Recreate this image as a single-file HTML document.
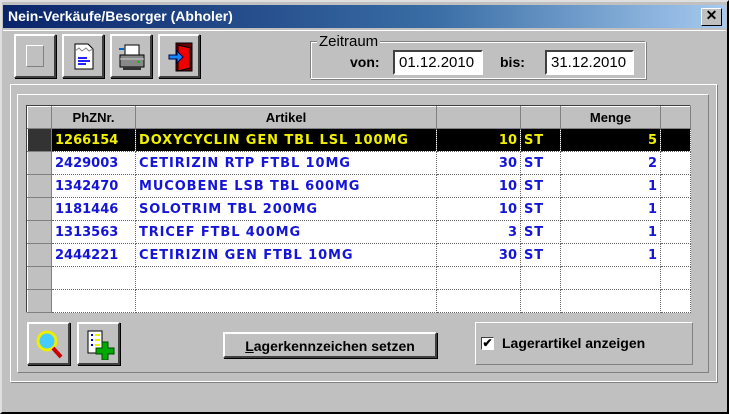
<html><head><style>
body{margin:0;width:729px;height:414px;background:#c0c0c0;font-family:"Liberation Sans",sans-serif;position:relative;overflow:hidden}
.a{position:absolute;box-sizing:border-box}
.btn{background:#c0c0c0;border:2px solid;border-color:#fff #404040 #404040 #fff;box-shadow:1px 1px 0 #000}
.inp{background:#fff;border:2px solid;border-color:#404040 #fff #fff #404040;font-size:15px;padding:2px 0 0 4px}
table{border-collapse:collapse;font-weight:bold;font-size:13px;font-family:"DejaVu Sans","Liberation Sans",sans-serif;table-layout:fixed}
td{height:23px;padding:0 3px;border-right:1px dotted #666;border-bottom:1px dotted #666;color:#1515d8;white-space:nowrap;overflow:hidden;box-sizing:border-box}
td.t{letter-spacing:0.9px}
th{height:22px;background:#c0c0c0;border:1px solid;border-color:#fff #808080 #808080 #fff;font-size:13px;font-family:"Liberation Sans",sans-serif}
td.i{background:#c0c0c0;border:1px solid;border-color:#fff #808080 #808080 #fff}
tr.sel td{background:#000;color:#f0f000}
tr.sel td.i{background:#333}
.r{text-align:right}
</style></head><body>
<div class="a" style="left:0;top:0;width:729px;height:414px;border:2px solid;border-color:#dfdfdf #000 #000 #dfdfdf"></div>
<div class="a" style="left:3px;top:5px;width:723px;height:23px;background:linear-gradient(90deg,#0a246a,#3a6ea5 60%,#a6caf0);color:#fff;font-weight:bold;font-size:14px;padding:3px 5px">Nein-Verkäufe/Besorger (Abholer)</div>
<div class="a btn" style="left:701px;top:8px;width:21px;height:18px;font-size:14px;font-weight:bold;text-align:center;line-height:13px;box-shadow:none;border-width:1px;border-color:#fff #000 #000 #fff">✕</div>
<div class="a" style="left:3px;top:29px;width:723px;height:2px;border-bottom:1px solid #fff"></div>
<div class="a btn" style="left:14px;top:34px;width:42px;height:44px"><div class="a" style="left:10px;top:9px;width:18px;height:22px;border:1px solid #fff;border-color:#fff #808080 #808080 #fff"></div></div>
<div class="a btn" style="left:62px;top:34px;width:42px;height:44px"><svg class="a" style="left:8px;top:6px" width="24" height="28"><path d="M3 2h13l5 5v20H3z" fill="#fff" stroke="#000"/><path d="M3 9l4-3 3 3 4-3 3 3 4-2" fill="none" stroke="#888"/><path d="M6 16h9M6 19h12M6 22h8" stroke="#22f" stroke-width="2"/></svg></div>
<div class="a btn" style="left:110px;top:34px;width:42px;height:44px"><svg class="a" style="left:5px;top:7px" width="30" height="28"><path d="M8 2h14v10H8z" fill="#fff" stroke="#000"/><path d="M3 12h24v12H3z" fill="#888" stroke="#000"/><path d="M3 16h24" stroke="#ccc"/><path d="M6 24h18v3H6z" fill="#333"/><rect x="20" y="18" width="3" height="2" fill="#0c0"/><path d="M2 6h5" stroke="#06c" stroke-width="2"/></svg></div>
<div class="a btn" style="left:158px;top:34px;width:42px;height:44px"><svg class="a" style="left:7px;top:5px" width="28" height="32"><path d="M9 2h16v28H9z" fill="#600" stroke="#000"/><path d="M11 4l12 3v20l-12 3z" fill="#e00" stroke="#000"/><path d="M2 14h8v-4l6 6-6 6v-4H2z" fill="#18f" stroke="#004"/></svg></div>
<div class="a" style="left:310px;top:41px;width:336px;height:38px;border:1px solid;border-color:#808080 #fff #fff #808080;box-shadow:inset 1px 1px 0 #fff,1px 1px 0 #808080"></div>
<div class="a" style="left:317px;top:33px;background:#c0c0c0;padding:0 2px;font-size:15px">Zeitraum</div>
<div class="a" style="left:350px;top:54px;font-size:14px;font-weight:bold">von:</div>
<div class="a inp" style="left:393px;top:50px;width:90px;height:25px">01.12.2010</div>
<div class="a" style="left:500px;top:54px;font-size:14px;font-weight:bold">bis:</div>
<div class="a inp" style="left:545px;top:50px;width:89px;height:25px">31.12.2010</div>
<div class="a" style="left:10px;top:84px;width:708px;height:299px;border:1px solid;border-color:#fff #808080 #808080 #fff;box-shadow:inset -1px -1px 0 #fff"></div>
<div class="a" style="left:17px;top:94px;width:692px;height:279px;border:1px solid;border-color:#fff #808080 #808080 #fff"></div>
<div class="a" style="left:26px;top:105px;width:665px;height:208px;background:#fff;border:1px solid;border-color:#404040 #fff #fff #404040">
<table style="width:663px">
<colgroup><col style="width:24px"><col style="width:84px"><col style="width:301px"><col style="width:84px"><col style="width:40px"><col style="width:100px"><col style="width:30px"></colgroup>
<tr><th></th><th>PhZNr.</th><th>Artikel</th><th></th><th></th><th>Menge</th><th></th></tr>
<tr class="sel"><td class="i"></td><td>1266154</td><td class="t">DOXYCYCLIN GEN TBL LSL 100MG</td><td class="r">10</td><td class="t">ST</td><td class="r">5</td><td></td></tr>
<tr><td class="i"></td><td>2429003</td><td class="t">CETIRIZIN RTP FTBL 10MG</td><td class="r">30</td><td class="t">ST</td><td class="r">2</td><td></td></tr>
<tr><td class="i"></td><td>1342470</td><td class="t">MUCOBENE LSB TBL 600MG</td><td class="r">10</td><td class="t">ST</td><td class="r">1</td><td></td></tr>
<tr><td class="i"></td><td>1181446</td><td class="t">SOLOTRIM TBL 200MG</td><td class="r">10</td><td class="t">ST</td><td class="r">1</td><td></td></tr>
<tr><td class="i"></td><td>1313563</td><td class="t">TRICEF FTBL 400MG</td><td class="r">3</td><td class="t">ST</td><td class="r">1</td><td></td></tr>
<tr><td class="i"></td><td>2444221</td><td class="t">CETIRIZIN GEN FTBL 10MG</td><td class="r">30</td><td class="t">ST</td><td class="r">1</td><td></td></tr>
<tr><td class="i"></td><td></td><td></td><td></td><td></td><td></td><td></td></tr>
<tr><td class="i"></td><td></td><td></td><td></td><td></td><td></td><td></td></tr>
</table></div>
<div class="a btn" style="left:27px;top:322px;width:43px;height:43px"><svg class="a" style="left:6px;top:5px" width="30" height="32"><circle cx="12" cy="12" r="9" fill="#4cf" stroke="#ee0" stroke-width="3"/><path d="M18 19l8 9" stroke="#c00" stroke-width="4"/></svg></div>
<div class="a btn" style="left:77px;top:322px;width:43px;height:43px"><svg class="a" style="left:7px;top:6px" width="30" height="30"><path d="M2 1h14v22H2z" fill="#fff" stroke="#000"/><path d="M5 5h2M5 10h2M5 15h2" stroke="#00c" stroke-width="2"/><path d="M9 5h5M9 10h5M9 15h5" stroke="#ee0" stroke-width="2"/><path d="M16 12h6v6h6v6h-6v6h-6v-6h-6v-6h6z" fill="#0a0" stroke="#040"/></svg></div>
<div class="a btn" style="left:223px;top:332px;width:214px;height:26px;font-size:14px;font-weight:bold;text-align:center;padding-top:4px"><u>L</u>agerkennzeichen setzen</div>
<div class="a" style="left:475px;top:322px;width:218px;height:43px;border:1px solid;border-color:#fff #808080 #808080 #fff"></div>
<div class="a" style="left:481px;top:337px;width:13px;height:13px;background:#fff;border:1px solid;border-color:#404040 #fff #fff #404040;font-size:12px;line-height:11px;text-align:center;font-weight:bold">✔</div>
<div class="a" style="left:502px;top:335px;font-size:14px;font-weight:bold">Lagerartikel anzeigen</div>
</body></html>
